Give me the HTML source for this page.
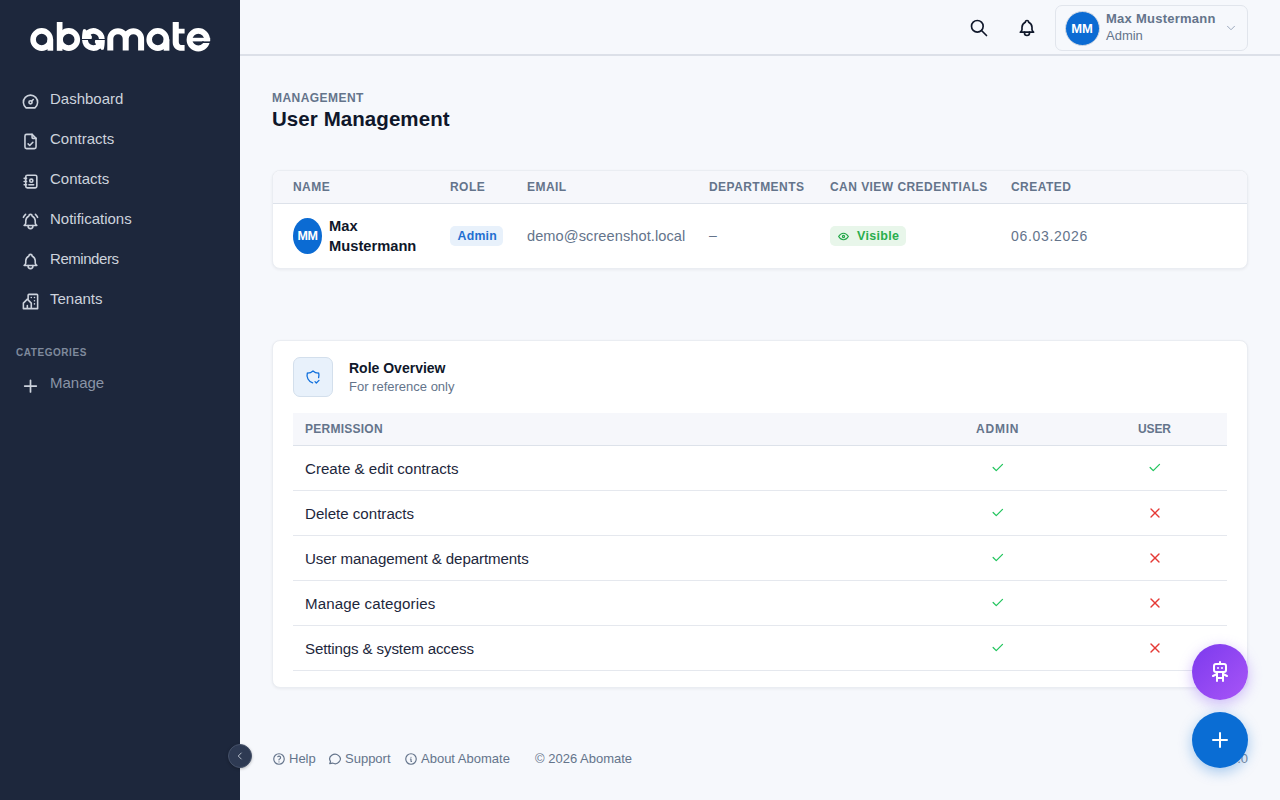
<!DOCTYPE html>
<html><head><meta charset="utf-8">
<style>
*{box-sizing:border-box;margin:0;padding:0}
html,body{width:1280px;height:800px;overflow:hidden}
body{font-family:"Liberation Sans",sans-serif;background:#f6f8fc;position:relative;color:#1d273c}
.abs{position:absolute}
.t{position:absolute;white-space:nowrap;line-height:1}
svg.i{position:absolute;fill:none;stroke-linecap:round;stroke-linejoin:round}
#sb{position:absolute;left:0;top:0;width:240px;height:800px;background:#1d273c}
.nav{position:absolute;left:50px;font-size:15px;color:#cdd3dd;white-space:nowrap;line-height:1}
.navi{left:20.8px;width:19px;height:19px;stroke:#cdd3dd;stroke-width:2}
#hdr{position:absolute;left:240px;top:0;width:1040px;height:56px;border-bottom:2px solid #dce0e8;background:#f6f8fc}
.card{position:absolute;background:#fff;border:1px solid #eaedf2;border-radius:8px;box-shadow:0 1px 3px rgba(15,23,42,.06)}
.th{position:absolute;white-space:nowrap;line-height:1;font-size:12px;font-weight:bold;color:#64748b;letter-spacing:.45px}
.td{position:absolute;white-space:nowrap;line-height:1;font-size:14px}
.rline{position:absolute;left:20px;width:934px;height:1px;background:#e5e8ee}
.perm{position:absolute;left:32px;font-size:15.1px;color:#1d273c;white-space:nowrap;line-height:1}
.ck{width:15px;height:15px;stroke:#22c55e;stroke-width:2}
.xx{width:16px;height:16px;stroke:#e53935;stroke-width:2}
.ft{position:absolute;top:752px;font-size:13px;color:#64748b;white-space:nowrap;line-height:1}
.fti{top:752px;width:14px;height:14px;stroke:#64748b;stroke-width:2}
</style></head><body>
<div id="sb">
  <svg class="abs" style="left:0;top:0" width="240" height="70" viewBox="0 0 240 70">
    <g fill="#fff">
    <circle cx="41.7" cy="39.5" r="8.6" fill="none" stroke="#fff" stroke-width="5.6"/>
    <rect x="47.5" y="39.4" width="5.7" height="11.3"/>
    <circle cx="68.7" cy="39.5" r="8.6" fill="none" stroke="#fff" stroke-width="5.6"/>
    <rect x="56.8" y="22" width="5.7" height="28.8"/>
    <path id="oh" d="M82 39C82 35.5 82.4 32 83.1 29.4L85.1 29.1L86.4 30.6A11.3 11.3 0 0 1 104.7 39L98.9 39A5.6 5.6 0 0 0 90.7 34.4L92 36.7L91.6 39Z"/><path d="M82 39C82 35.5 82.4 32 83.1 29.4L85.1 29.1L86.4 30.6A11.3 11.3 0 0 1 104.7 39L98.9 39A5.6 5.6 0 0 0 90.7 34.4L92 36.7L91.6 39Z" transform="rotate(180 93.4 39.5)"/>
    <path d="M110.3 50.5V38.85A7.7 7.7 0 0 1 125.7 38.85V50.5M125.7 38.85A7.7 7.7 0 0 1 141.1 38.85V50.5" fill="none" stroke="#fff" stroke-width="6"/>
    <circle cx="157.8" cy="39.5" r="8.6" fill="none" stroke="#fff" stroke-width="5.6"/>
    <rect x="163.7" y="39.4" width="5.7" height="11.3"/>
    <path d="M172.7 22h6.1v6.8h5.8v4.7h-5.8v8.4c0 2.1 1.2 3.1 3.2 3.1h2.6V50.8h-2.6c-5.7 0-9.3-3.3-9.3-8.6z"/>
    <circle cx="198.3" cy="39.7" r="8.8" fill="none" stroke="#fff" stroke-width="5.8"/><rect x="191" y="37.8" width="19.2" height="3.6"/><rect x="202" y="41.4" width="10" height="1.6" fill="#1d273c"/>
    </g>
      </svg>

  <!-- nav icons -->
  <svg class="i navi" style="top:92px" viewBox="0 0 24 24"><circle cx="12" cy="13" r="2"/><path d="M13.45 11.55l2.05 -2.05"/><path d="M6.4 20a9 9 0 1 1 11.2 0z"/></svg>
  <svg class="i navi" style="top:132px" viewBox="0 0 24 24"><path d="M14 3v4a1 1 0 0 0 1 1h4"/><path d="M17 21h-10a2 2 0 0 1 -2 -2v-14a2 2 0 0 1 2 -2h7l5 5v11a2 2 0 0 1 -2 2z"/><path d="M9 15l2 2l4 -4"/></svg>
  <svg class="i navi" style="top:172px" viewBox="0 0 24 24"><path d="M20 6v12a2 2 0 0 1 -2 2h-10a2 2 0 0 1 -2 -2v-12a2 2 0 0 1 2 -2h10a2 2 0 0 1 2 2z"/><path d="M10 16h6"/><path d="M11 11a2 2 0 1 0 4 0a2 2 0 1 0 -4 0"/><path d="M4 8h3"/><path d="M4 12h3"/><path d="M4 16h3"/></svg>
  <svg class="i navi" style="top:212px" viewBox="0 0 24 24"><path d="M10 5a2 2 0 0 1 4 0a7 7 0 0 1 4 6v3a4 4 0 0 0 2 3h-16a4 4 0 0 0 2 -3v-3a7 7 0 0 1 4 -6"/><path d="M9 17v1a3 3 0 0 0 6 0v-1"/><path d="M21 6.727a11.05 11.05 0 0 0 -2.794 -3.727"/><path d="M3 6.727a11.05 11.05 0 0 1 2.792 -3.727"/></svg>
  <svg class="i navi" style="top:252px" viewBox="0 0 24 24"><path d="M10 5a2 2 0 1 1 4 0a7 7 0 0 1 4 6v3a4 4 0 0 0 2 3h-16a4 4 0 0 0 2 -3v-3a7 7 0 0 1 4 -6"/><path d="M9 17v1a3 3 0 0 0 6 0v-1"/></svg>
  <svg class="i navi" style="top:292px" viewBox="0 0 24 24"><path d="M8 9l5 5v7h-5v-4m0 4h-5v-7l5 -5m1 1v-6a1 1 0 0 1 1 -1h10a1 1 0 0 1 1 1v17h-8"/><path d="M13 7l0 .01"/><path d="M17 7l0 .01"/><path d="M17 11l0 .01"/><path d="M17 15l0 .01"/></svg>

  <div class="nav" style="top:91px">Dashboard</div>
  <div class="nav" style="top:131px">Contracts</div>
  <div class="nav" style="top:171px">Contacts</div>
  <div class="nav" style="top:211px">Notifications</div>
  <div class="nav" style="top:251px;letter-spacing:-.45px">Reminders</div>
  <div class="nav" style="top:291px">Tenants</div>
  <div class="t" style="left:16px;top:348px;font-size:10px;font-weight:bold;letter-spacing:.55px;color:#7f8a9c">CATEGORIES</div>
  <svg class="i" style="left:22px;top:377px;width:17px;height:17px;stroke:#cdd3dd;stroke-width:1.7" viewBox="0 0 17 17"><path d="M8.5 3.3v11.6M2.7 9.1h11.6"/></svg>
  <div class="nav" style="top:375px;color:#8a94a6">Manage</div>
</div>

<div id="hdr"></div>
<svg class="i" style="left:969px;top:18px;width:20px;height:20px;stroke:#0f172a;stroke-width:2" viewBox="0 0 24 24"><path d="M3 10a7 7 0 1 0 14 0a7 7 0 1 0 -14 0"/><path d="M21 21l-6 -6"/></svg>
<svg class="i" style="left:1017px;top:18px;width:20px;height:20px;stroke:#0f172a;stroke-width:2" viewBox="0 0 24 24"><path d="M10 5a2 2 0 1 1 4 0a7 7 0 0 1 4 6v3a4 4 0 0 0 2 3h-16a4 4 0 0 0 2 -3v-3a7 7 0 0 1 4 -6"/><path d="M9 17v1a3 3 0 0 0 6 0v-1"/></svg>
<div class="abs" style="left:1055px;top:5px;width:193px;height:46px;border:1px solid #e1e5ec;border-radius:7px"></div>
<div class="abs" style="left:1064.5px;top:10.5px;width:35px;height:35px;border-radius:50%;background:#0b6bd3;border:1.5px solid #d6dbe3"></div>
<div class="t" style="left:1068px;top:22px;width:28px;text-align:center;font-size:13px;font-weight:bold;color:#fff">MM</div>
<div class="t" style="left:1106px;top:12px;font-size:13px;font-weight:bold;color:#64748b;letter-spacing:.25px">Max Mustermann</div>
<div class="t" style="left:1106px;top:29px;font-size:13px;color:#64748b">Admin</div>
<svg class="i" style="left:1224px;top:21px;width:14px;height:14px;stroke:#94a3b8;stroke-width:1.6" viewBox="0 0 24 24"><path d="M6 9l6 6l6 -6"/></svg>

<!-- title -->
<div class="t" style="left:272px;top:92px;font-size:12px;font-weight:bold;color:#64748b;letter-spacing:.45px">MANAGEMENT</div>
<div class="t" style="left:272px;top:109px;font-size:20.5px;font-weight:bold;color:#0f172a;letter-spacing:.07px">User Management</div>

<!-- users table -->
<div class="card" style="left:272px;top:170px;width:976px;height:99px;overflow:hidden">
  <div class="abs" style="left:0;top:0;width:976px;height:33px;background:#f6f7fb;border-bottom:1px solid #dde2ea"></div>
  <div class="th" style="left:20px;top:10px">NAME</div>
  <div class="th" style="left:177px;top:10px">ROLE</div>
  <div class="th" style="left:254px;top:10px">EMAIL</div>
  <div class="th" style="left:436px;top:10px">DEPARTMENTS</div>
  <div class="th" style="left:557px;top:10px">CAN VIEW CREDENTIALS</div>
  <div class="th" style="left:738px;top:10px">CREATED</div>
  <div class="abs" style="left:20px;top:47px;width:29px;height:36px;border-radius:50%;background:#0b6bd3"></div>
  <div class="t" style="left:20px;top:59px;width:29px;text-align:center;font-size:12.5px;font-weight:bold;color:#fff;letter-spacing:-.3px">MM</div>
  <div class="t" style="left:56px;top:45px;font-size:14.7px;font-weight:bold;color:#0f172a;line-height:20px">Max<br>Mustermann</div>
  <div class="abs" style="left:177px;top:55px;width:53px;height:20px;border-radius:5px;background:#e8f1fb"></div>
  <div class="t" style="left:184.6px;top:59px;font-size:12.3px;font-weight:bold;color:#1f6fd1;letter-spacing:.2px">Admin</div>
  <div class="td" style="left:254px;top:58px;color:#64748b;font-size:14.6px;letter-spacing:.07px">demo@screenshot.local</div>
  <div class="td" style="left:436px;top:57px;color:#64748b">–</div>
  <div class="abs" style="left:557px;top:55px;width:76px;height:20px;border-radius:5px;background:#e8f6ea"></div>
  <svg class="i" style="left:564px;top:59px;width:13px;height:13px;stroke:#25a84a;stroke-width:2.2" viewBox="0 0 24 24"><path d="M10 12a2 2 0 1 0 4 0a2 2 0 0 0 -4 0"/><path d="M21 12c-2.4 4 -5.4 6 -9 6c-3.6 0 -6.6 -2 -9 -6c2.4 -4 5.4 -6 9 -6c3.6 0 6.6 2 9 6"/></svg>
  <div class="t" style="left:584px;top:59px;font-size:12.5px;font-weight:bold;color:#2aae4e;letter-spacing:.3px">Visible</div>
  <div class="td" style="left:738px;top:58px;color:#64748b;letter-spacing:.7px">06.03.2026</div>
</div>

<!-- role overview -->
<div class="card" style="left:272px;top:340px;width:976px;height:348px">
  <div class="abs" style="left:20px;top:16px;width:40px;height:40px;border-radius:7px;background:#e8f1fb;border:1px solid #d3dfec"></div>
  <svg class="i" style="left:32.3px;top:27.5px;width:16px;height:16px;stroke:#0f6fdc;stroke-width:1.9" viewBox="0 0 24 24"><path d="M11.46 20.846a12 12 0 0 1 -7.96 -14.846a12 12 0 0 0 8.5 -3a12 12 0 0 0 8.5 3a12 12 0 0 1 -.09 7.06"/><path d="M15 19l2 2l4 -4"/></svg>
  <div class="t" style="left:76px;top:20px;font-size:14px;font-weight:bold;color:#0f172a">Role Overview</div>
  <div class="t" style="left:76px;top:39px;font-size:13px;color:#64748b">For reference only</div>
  <div class="abs" style="left:20px;top:72px;width:934px;height:33px;background:#f6f7fb;border-bottom:1px solid #dde2ea"></div>
  <div class="th" style="left:32px;top:82px;letter-spacing:.25px">PERMISSION</div>
  <div class="th" style="left:703px;top:82px;letter-spacing:.8px">ADMIN</div>
  <div class="th" style="left:865px;top:82px;letter-spacing:-.1px">USER</div>

  <div class="perm" style="top:120px">Create &amp; edit contracts</div>
  <div class="rline" style="top:149px"></div>
  <div class="perm" style="top:165px">Delete contracts</div>
  <div class="rline" style="top:194px"></div>
  <div class="perm" style="top:210px;letter-spacing:-.1px">User management &amp; departments</div>
  <div class="rline" style="top:239px"></div>
  <div class="perm" style="top:255px;letter-spacing:.12px">Manage categories</div>
  <div class="rline" style="top:284px"></div>
  <div class="perm" style="top:300px;letter-spacing:-.13px">Settings &amp; system access</div>
  <div class="rline" style="top:329px"></div>

  <svg class="i ck" style="left:717.3px;top:119.3px" viewBox="0 0 24 24"><path d="M5 12l5 5l10 -10"/></svg>
  <svg class="i ck" style="left:874.3px;top:119.3px" viewBox="0 0 24 24"><path d="M5 12l5 5l10 -10"/></svg>
  <svg class="i ck" style="left:717.3px;top:164.3px" viewBox="0 0 24 24"><path d="M5 12l5 5l10 -10"/></svg>
  <svg class="i xx" style="left:874px;top:164px" viewBox="0 0 24 24"><path d="M18 6l-12 12"/><path d="M6 6l12 12"/></svg>
  <svg class="i ck" style="left:717.3px;top:209.3px" viewBox="0 0 24 24"><path d="M5 12l5 5l10 -10"/></svg>
  <svg class="i xx" style="left:874px;top:209px" viewBox="0 0 24 24"><path d="M18 6l-12 12"/><path d="M6 6l12 12"/></svg>
  <svg class="i ck" style="left:717.3px;top:254.3px" viewBox="0 0 24 24"><path d="M5 12l5 5l10 -10"/></svg>
  <svg class="i xx" style="left:874px;top:254px" viewBox="0 0 24 24"><path d="M18 6l-12 12"/><path d="M6 6l12 12"/></svg>
  <svg class="i ck" style="left:717.3px;top:299.3px" viewBox="0 0 24 24"><path d="M5 12l5 5l10 -10"/></svg>
  <svg class="i xx" style="left:874px;top:299px" viewBox="0 0 24 24"><path d="M18 6l-12 12"/><path d="M6 6l12 12"/></svg>
</div>

<!-- footer -->
<svg class="i fti" style="left:272px" viewBox="0 0 24 24"><path d="M3 12a9 9 0 1 0 18 0a9 9 0 1 0 -18 0"/><path d="M12 17v.01"/><path d="M12 13.5a1.5 1.5 0 0 1 1 -1.5a2.6 2.6 0 1 0 -3 -4"/></svg>
<div class="ft" style="left:289px">Help</div>
<svg class="i fti" style="left:328px" viewBox="0 0 24 24"><path d="M3 20l1.3 -3.9c-2.324 -3.437 -1.426 -7.872 2.1 -10.374c3.526 -2.501 8.59 -2.296 11.845 .48c3.255 2.777 3.695 7.266 1.029 10.501c-2.666 3.235 -7.615 4.215 -11.574 2.293l-4.7 1"/></svg>
<div class="ft" style="left:345px">Support</div>
<svg class="i fti" style="left:404px" viewBox="0 0 24 24"><path d="M3 12a9 9 0 1 0 18 0a9 9 0 1 0 -18 0"/><path d="M12 9h.01"/><path d="M11 12h1v4h1"/></svg>
<div class="ft" style="left:421px">About Abomate</div>
<div class="ft" style="left:535px">© 2026 Abomate</div>
<div class="ft" style="right:32px;text-align:right;color:#7b8798">v1.0.0</div>

<!-- collapse btn -->
<div class="abs" style="left:228px;top:744px;width:24px;height:24px;border-radius:50%;background:#2e3a53;border:1px solid #46526a;box-shadow:0 1px 3px rgba(0,0,0,.25)"></div>
<svg class="i" style="left:233.5px;top:749.5px;width:12px;height:12px;stroke:#c5ccd8;stroke-width:1.8" viewBox="0 0 24 24"><path d="M14.5 6l-6 6l6 6"/></svg>

<!-- FABs -->
<div class="abs" style="left:1192px;top:644px;width:56px;height:56px;border-radius:50%;background:linear-gradient(135deg,#7c3aed,#a855f7);box-shadow:0 4px 14px rgba(139,92,246,.4)"></div>
<svg class="i" style="left:1208px;top:660px;width:24px;height:24px;stroke:#fff;stroke-width:2" viewBox="0 0 24 24"><path d="M6 6a2 2 0 0 1 2 -2h8a2 2 0 0 1 2 2v4a2 2 0 0 1 -2 2h-8a2 2 0 0 1 -2 -2z"/><path d="M12 2v2"/><path d="M9 12v9"/><path d="M15 12v9"/><path d="M5 16l4 -2"/><path d="M15 14l4 2"/><path d="M9 18h6"/><path d="M10 8v.01"/><path d="M14 8v.01"/></svg>
<div class="abs" style="left:1192px;top:712px;width:56px;height:56px;border-radius:50%;background:#0a6dd4;box-shadow:0 4px 14px rgba(10,109,212,.35)"></div>
<svg class="i" style="left:1208px;top:728px;width:24px;height:24px;stroke:#fff;stroke-width:2" viewBox="0 0 24 24"><path d="M12 5v14"/><path d="M5 12h14"/></svg>

</body></html>
